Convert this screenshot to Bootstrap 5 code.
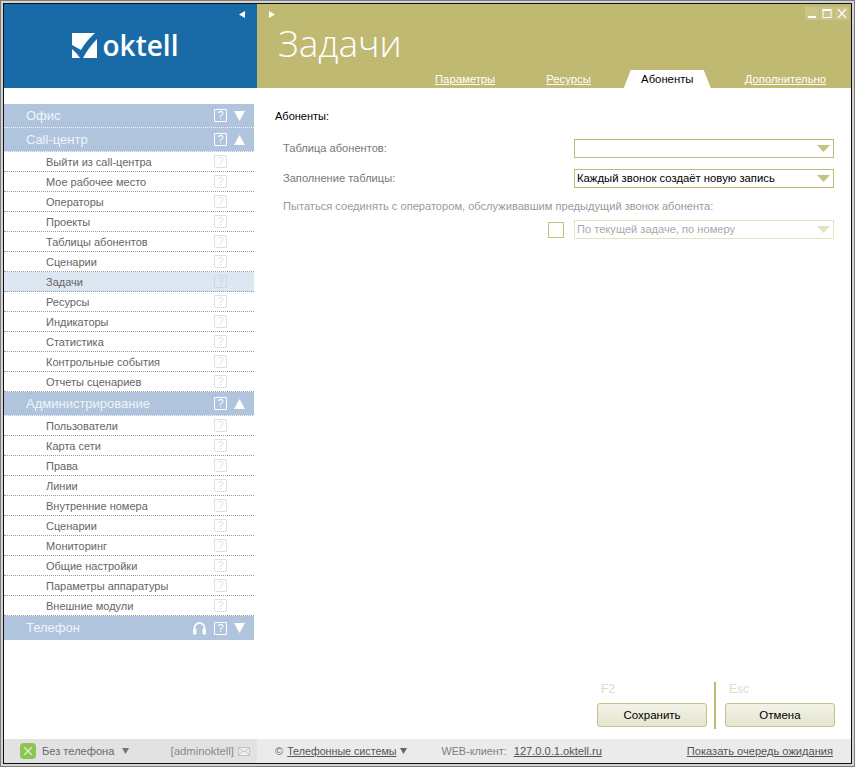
<!DOCTYPE html>
<html lang="ru"><head><meta charset="utf-8"><title>oktell</title>
<link href="https://cdn.jsdelivr.net/npm/bootstrap@5.3.0/dist/css/bootstrap.min.css" rel="stylesheet">
<style>
html,body{margin:0;height:767px;overflow:hidden;background:#fff}
body{font-family:"Liberation Sans",Arial,sans-serif;font-size:11px;line-height:14px;color:#666}
.win{width:855px;height:767px;border:1px solid #7d7d7d;padding:2px;background:#d4d4d4}
.win-in{height:100%;border:1px solid #111;background:#fff}
.hd{height:84px}
.hd-l{width:253px;background:#196ba8}
.hd-r{background:#bfb972}
.arrow-btn{height:20px}
.logo-row{padding-top:9px;padding-right:11px}
.logo-mark{margin-right:6px}
.logo-text{font-family:"Open Sans",sans-serif;font-weight:600;font-size:28px;line-height:25px;color:#fff}
.title{font-family:"Open Sans",sans-serif;font-weight:300;font-size:37px;line-height:44px;color:#fff;margin:-3px 0 0 21px}
.tabs{height:18px;font-size:11.3px;line-height:18px;padding-left:178px}
.tabs a{color:#fff}
.tab-on{width:87px;background:#fff;color:#000;text-align:center;clip-path:polygon(7px 0,80px 0,100% 100%,0 100%);margin:0 34px 0 33px}
.t1{margin-right:51px}
.ctl{position:absolute;top:3px;right:2px;gap:1px}
.ctl i{display:flex;width:14px;height:13px;background:#c9c489;align-items:center;justify-content:center}
.side{width:250px;padding-top:16px}
.bar{height:24px;background:#b0c4de;color:#f1f4f9;font-size:13px;padding-left:22px;border-bottom:1px dotted #f4f4f4}
.bar.l{border-bottom:0}
.itm{height:20px;padding-left:42px;font-size:11px;color:#666;border-bottom:1px dotted #999}
.itm.on{background:#dde7f1}
.hint{width:13px;height:13px;border:1px solid #fff;border-radius:1px;font-size:11px;line-height:11px;text-align:center;color:#fff;display:block;flex:none}
.itm .hint{border-color:#d8e2ea;color:#d8e2ea;margin-right:27px}
.itm.on .hint{border-color:#c9d6e4;color:#c9d6e4}
.bar .hint{margin-right:7px}
.tri{margin-right:9px;flex:none}
.main{padding:17px 17px 0 21px}
.sec{color:#000;font-size:11px;height:28px;line-height:22px}
.lbl{color:#787878;font-size:11.1px;padding-left:8px}
.rowf{height:30px}
.sel{width:260px;height:19px;border:1px solid #bfb972;padding-left:2px;font-size:11.3px;line-height:17px;color:#000;background:#fff}
.sel.off{border-color:#e4e1c4;color:#a9a9a9;font-size:11.1px}
.sel svg{margin-right:3px}
.dim{color:#9a9a9a;margin-top:6px}
.opt{margin-top:7px}
.chk{width:16px;height:16px;border:1px solid #c6c17f;margin-right:10px}
.acts{margin-right:-1px;padding-bottom:12px}
.act{width:110px}
.key{color:#dcdcc8;height:21px;padding-left:4px;font-size:12px;line-height:14px}
.bt{display:block;width:110px;height:24px;padding:0;font-size:11.5px;line-height:22px;color:#000;border:1px solid #c8c382;border-radius:3px;background:linear-gradient(#f3f3e8,#e4e4d0)}
.vline{width:2px;height:47px;background:#bfb972;margin:0 9px -2px 7px}
.ft{height:24px}
.ft-l{width:253px;background:#e2e2e2;padding-left:16px;font-size:11.1px;color:#6a6a6a}
.ft-r{background:#ebebeb;font-size:11.1px;color:#6a6a6a;padding:0 18px 0 18px}
.ft-r a{color:#555}
.sys{font-size:10.7px}
.web{color:#808080;margin-left:34px;font-size:10.8px}
.ip{margin-left:7px}
.gbtn{width:16px;height:16px;border-radius:4px;background:#8cc456;margin-right:6px}
.usr{color:#8a8a8a;font-size:11.3px}
.mail{margin:0 7px 0 4px}
</style></head><body>
<div class="win"><div class="win-in d-flex flex-column">
 <div class="hd d-flex">
  <div class="hd-l d-flex flex-column">
   <div class="arrow-btn d-flex justify-content-end align-items-center pe-2"><svg width="6" height="7" class="me-1"><polygon points="6,0 6,7 0,3.5" fill="#fff"/></svg></div>
   <div class="logo-row d-flex align-items-center justify-content-center">
    <svg width="25" height="25" viewBox="0 0 25 25" class="logo-mark"><path fill-rule="evenodd" d="M0 0H25V25H0ZM0 12 9 17Q14 8 23 0H25V6Q17 14 11 25H8Q5 20 0 16Z" fill="#fff"/></svg>
    <span class="logo-text">oktell</span>
   </div>
  </div>
  <div class="hd-r flex-grow-1 d-flex flex-column position-relative">
   <div class="arrow-btn d-flex align-items-center ps-2"><svg width="6" height="7" class="ms-1"><polygon points="0,0 0,7 6,3.500" fill="#fff"/></svg></div>
   <div class="title">Задачи</div>
   <div class="tabs d-flex mt-auto">
    <a href="#" class="t1">Параметры</a><a href="#">Ресурсы</a>
    <div class="tab-on">Абоненты</div>
    <a href="#">Дополнительно</a>
   </div>
   <div class="ctl d-flex">
    <i><svg width="10" height="9"><rect x="1" y="7" width="8" height="2" fill="#fff"/></svg></i>
    <i><svg width="10" height="9"><rect x="1" y=".5" width="8" height="8" fill="none" stroke="#fff"/><rect x="1" y="0" width="8" height="2" fill="#fff"/></svg></i>
    <i><svg width="10" height="9"><path d="M1 0 9 9M9 0 1 9" stroke="#fff" stroke-width="1.200"/></svg></i>
   </div>
  </div>
 </div>
 <div class="flex-grow-1 d-flex" style="min-height:0">
  <div class="side flex-none">
   <div class="bar d-flex align-items-center"><span class="me-auto">Офис</span><span class="hint">?</span><svg class="tri" width="11" height="10"><polygon points="0,0 11,0 5.500,10" fill="#fff"/></svg></div>
   <div class="bar d-flex align-items-center"><span class="me-auto">Call-центр</span><span class="hint">?</span><svg class="tri" width="11" height="10"><polygon points="0,10 11,10 5.500,0" fill="#fff"/></svg></div>
   <div class="itm d-flex align-items-center"><span class="me-auto">Выйти из call-центра</span><span class="hint">?</span></div>
   <div class="itm d-flex align-items-center"><span class="me-auto">Мое рабочее место</span><span class="hint">?</span></div>
   <div class="itm d-flex align-items-center"><span class="me-auto">Операторы</span><span class="hint">?</span></div>
   <div class="itm d-flex align-items-center"><span class="me-auto">Проекты</span><span class="hint">?</span></div>
   <div class="itm d-flex align-items-center"><span class="me-auto">Таблицы абонентов</span><span class="hint">?</span></div>
   <div class="itm d-flex align-items-center"><span class="me-auto">Сценарии</span><span class="hint">?</span></div>
   <div class="itm on d-flex align-items-center"><span class="me-auto">Задачи</span><span class="hint">?</span></div>
   <div class="itm d-flex align-items-center"><span class="me-auto">Ресурсы</span><span class="hint">?</span></div>
   <div class="itm d-flex align-items-center"><span class="me-auto">Индикаторы</span><span class="hint">?</span></div>
   <div class="itm d-flex align-items-center"><span class="me-auto">Статистика</span><span class="hint">?</span></div>
   <div class="itm d-flex align-items-center"><span class="me-auto">Контрольные события</span><span class="hint">?</span></div>
   <div class="itm d-flex align-items-center"><span class="me-auto">Отчеты сценариев</span><span class="hint">?</span></div>
   <div class="bar d-flex align-items-center"><span class="me-auto">Администрирование</span><span class="hint">?</span><svg class="tri" width="11" height="10"><polygon points="0,10 11,10 5.500,0" fill="#fff"/></svg></div>
   <div class="itm d-flex align-items-center"><span class="me-auto">Пользователи</span><span class="hint">?</span></div>
   <div class="itm d-flex align-items-center"><span class="me-auto">Карта сети</span><span class="hint">?</span></div>
   <div class="itm d-flex align-items-center"><span class="me-auto">Права</span><span class="hint">?</span></div>
   <div class="itm d-flex align-items-center"><span class="me-auto">Линии</span><span class="hint">?</span></div>
   <div class="itm d-flex align-items-center"><span class="me-auto">Внутренние номера</span><span class="hint">?</span></div>
   <div class="itm d-flex align-items-center"><span class="me-auto">Сценарии</span><span class="hint">?</span></div>
   <div class="itm d-flex align-items-center"><span class="me-auto">Мониторинг</span><span class="hint">?</span></div>
   <div class="itm d-flex align-items-center"><span class="me-auto">Общие настройки</span><span class="hint">?</span></div>
   <div class="itm d-flex align-items-center"><span class="me-auto">Параметры аппаратуры</span><span class="hint">?</span></div>
   <div class="itm d-flex align-items-center"><span class="me-auto">Внешние модули</span><span class="hint">?</span></div>
   <div class="bar l d-flex align-items-center"><span class="me-auto">Телефон</span><svg width="13" height="13" viewBox="0 0 13 13" class="me-2"><path d="M1.500 9V6a5 5 0 0 1 10 0V9" fill="none" stroke="#fff" stroke-width="1.800"/><rect x="0" y="7" width="3.500" height="5.500" rx="1" fill="#fff"/><rect x="9.500" y="7" width="3.500" height="5.500" rx="1" fill="#fff"/></svg><span class="hint">?</span><svg class="tri" width="11" height="10"><polygon points="0,0 11,0 5.500,10" fill="#fff"/></svg></div>
  </div>
  <div class="main flex-grow-1 d-flex flex-column">
   <div class="sec">Абоненты:</div>
   <div class="rowf d-flex align-items-center justify-content-between"><span class="lbl">Таблица абонентов:</span><div class="sel d-flex align-items-center justify-content-end"><svg width="13" height="7"><polygon points="0,0 13,0 6.500,7" fill="#c6c17f"/></svg></div></div>
   <div class="rowf d-flex align-items-center justify-content-between"><span class="lbl">Заполнение таблицы:</span><div class="sel d-flex align-items-center justify-content-between">Каждый звонок создаёт новую запись<svg width="13" height="7"><polygon points="0,0 13,0 6.500,7" fill="#c6c17f"/></svg></div></div>
   <div class="lbl dim">Пытаться соединять с оператором, обслуживавшим предыдущий звонок абонента:</div>
   <div class="opt d-flex justify-content-end align-items-center"><span class="chk"></span><div class="sel off d-flex align-items-center justify-content-between">По текущей задаче, по номеру<svg width="13" height="7"><polygon points="0,0 13,0 6.500,7" fill="#e4e1c4"/></svg></div></div>
   <div class="acts d-flex justify-content-end align-items-end mt-auto">
    <div class="act"><div class="key">F2</div><button class="bt" type="button">Сохранить</button></div>
    <div class="vline"></div>
    <div class="act"><div class="key">Esc</div><button class="bt" type="button">Отмена</button></div>
   </div>
  </div>
 </div>
 <div class="ft d-flex">
  <div class="ft-l d-flex align-items-center">
   <span class="gbtn d-flex align-items-center justify-content-center"><svg width="8" height="8"><path d="M0 0 8 8M8 0 0 8" stroke="#d8eebf" stroke-width="1.500"/></svg></span>
   <span>Без телефона</span>
   <svg width="7" height="6" class="ms-2"><polygon points="0,0 7,0 3.500,6" fill="#777"/></svg>
   <span class="usr ms-auto">[adminoktell]</span>
   <svg width="12" height="9" class="mail"><rect x=".5" y=".5" width="11" height="8" fill="#efefef" stroke="#c4c4c4"/><path d="M.5 .5 6 5 11.500 .5M.5 8.500 4.500 4M11.500 8.500 7.500 4" fill="none" stroke="#c4c4c4"/></svg>
  </div>
  <div class="ft-r flex-grow-1 d-flex align-items-center">
   <span class="me-1">©</span><a href="#" class="sys">Телефонные системы</a>
   <svg width="7" height="6" class="ms-1"><polygon points="0,0 7,0 3.500,6" fill="#666"/></svg>
   <span class="web">WEB-клиент:</span><a href="#" class="ip me-auto">127.0.0.1.oktell.ru</a>
   <a href="#">Показать очередь ожидания</a>
  </div>
 </div>
</div></div>
</body></html>
